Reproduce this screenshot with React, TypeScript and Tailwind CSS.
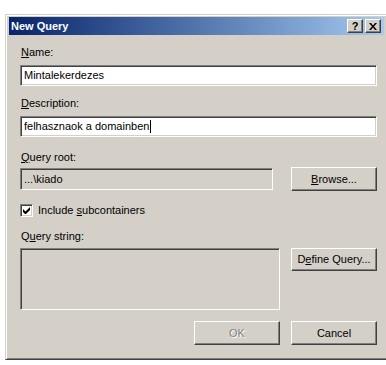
import React from "react";

const sunken =
  "border border-t-[#808080] border-l-[#808080] border-b-white border-r-white shadow-[inset_1px_1px_0_#404040,inset_-1px_-1px_0_#d4d0c8]";
const raised =
  "border border-t-white border-l-white border-b-[#404040] border-r-[#404040] shadow-[inset_-1px_-1px_0_#808080] bg-[#d4d0c8] flex items-center justify-center";

function U({ children }: { children: React.ReactNode }) {
  return <span className="underline underline-offset-[1px]">{children}</span>;
}

export default function App() {
  return (
    <div
      className="w-[386px] h-[365px] bg-white overflow-hidden text-[11px] leading-[13px] text-black"
      style={{ fontFamily: '"Liberation Sans", Arial, sans-serif' }}
    >
      <div className="mt-[14px] ml-[5px] w-[383px] h-[346px] bg-[#d4d0c8] border border-t-[#d4d0c8] border-l-[#d4d0c8] border-b-[#404040] border-r-[#404040] shadow-[inset_1px_1px_0_#fff,inset_-1px_-1px_0_#808080] pt-[2px] px-[3px] flex flex-col">
        {/* Title bar */}
        <div className="h-[18px] flex items-center bg-gradient-to-r from-[#0a246a] to-[#a6caf0] pl-[2px] pr-[3px]">
          <span className="font-bold text-white text-[11px] leading-[13px] flex-1">New Query</span>
          <div className="flex gap-[2px]">
            <div className={`${raised} w-[16px] h-[14px]`}>
              <span className="font-bold text-[11px] leading-[11px] text-black">?</span>
            </div>
            <div className={`${raised} w-[16px] h-[14px]`}>
              <svg width="8" height="7" viewBox="0 0 8 7">
                <path d="M0 0h2l2 2.5L6 0h2L5 3.5 8 7H6L4 4.5 2 7H0l3-3.5z" fill="#000" />
              </svg>
            </div>
          </div>
        </div>

        {/* Content */}
        <div className="flex flex-col pl-[11px] w-[368px]">
          <div className="mt-[11px] h-[13px] pl-[1px]">
            <U>N</U>ame:
          </div>
          <div className={`${sunken} mt-[6px] h-[21px] bg-white flex items-center pl-[3px]`}>
            Mintalekerdezes
          </div>

          <div className="mt-[11px] h-[13px] pl-[1px]">
            <U>D</U>escription:
          </div>
          <div className={`${sunken} mt-[6px] h-[21px] bg-white flex items-center pl-[3px]`}>
            felhasznaok a domainben
            <span className="inline-block w-px h-[13px] bg-black ml-[1px]" />
          </div>

          <div className="mt-[14px] h-[13px] pl-[1px]">
            <U>Q</U>uery root:
          </div>
          <div className="mt-[3px] flex justify-between items-start">
            <div className={`${sunken} mt-[1px] w-[253px] h-[22px] flex items-center pl-[3px]`}>
              ...\kiado
            </div>
            <div className={`${raised} w-[86px] h-[24px]`}>
              <span>
                <U>B</U>rowse...
              </span>
            </div>
          </div>

          <div className="mt-[13px] flex items-center h-[13px]">
            <div className={`${sunken} w-[13px] h-[13px] bg-white flex items-center justify-center`}>
              <svg width="7" height="7" viewBox="0 0 7 7">
                <path d="M0 2v3l2 2h1l4-4V0L2.5 4.5z" fill="#000" />
              </svg>
            </div>
            <span className="ml-[5px]">
              Include <U>s</U>ubcontainers
            </span>
          </div>

          <div className="mt-[13px] h-[13px] pl-[1px]">
            Q<U>u</U>ery string:
          </div>
          <div className="mt-[5px] flex justify-between items-start">
            <div className={`${sunken} w-[260px] h-[62px]`} />
            <div className={`${raised} w-[86px] h-[23px]`}>
              <span>
                D<U>e</U>fine Query...
              </span>
            </div>
          </div>

          <div className="mt-[11px] flex justify-end gap-[11px]">
            <div className={`${raised} w-[86px] h-[24px]`}>
              <span className="text-[#808080] [text-shadow:1px_1px_0_#fff]">OK</span>
            </div>
            <div className={`${raised} w-[86px] h-[24px]`}>
              <span>Cancel</span>
            </div>
          </div>
        </div>
      </div>
    </div>
  );
}
